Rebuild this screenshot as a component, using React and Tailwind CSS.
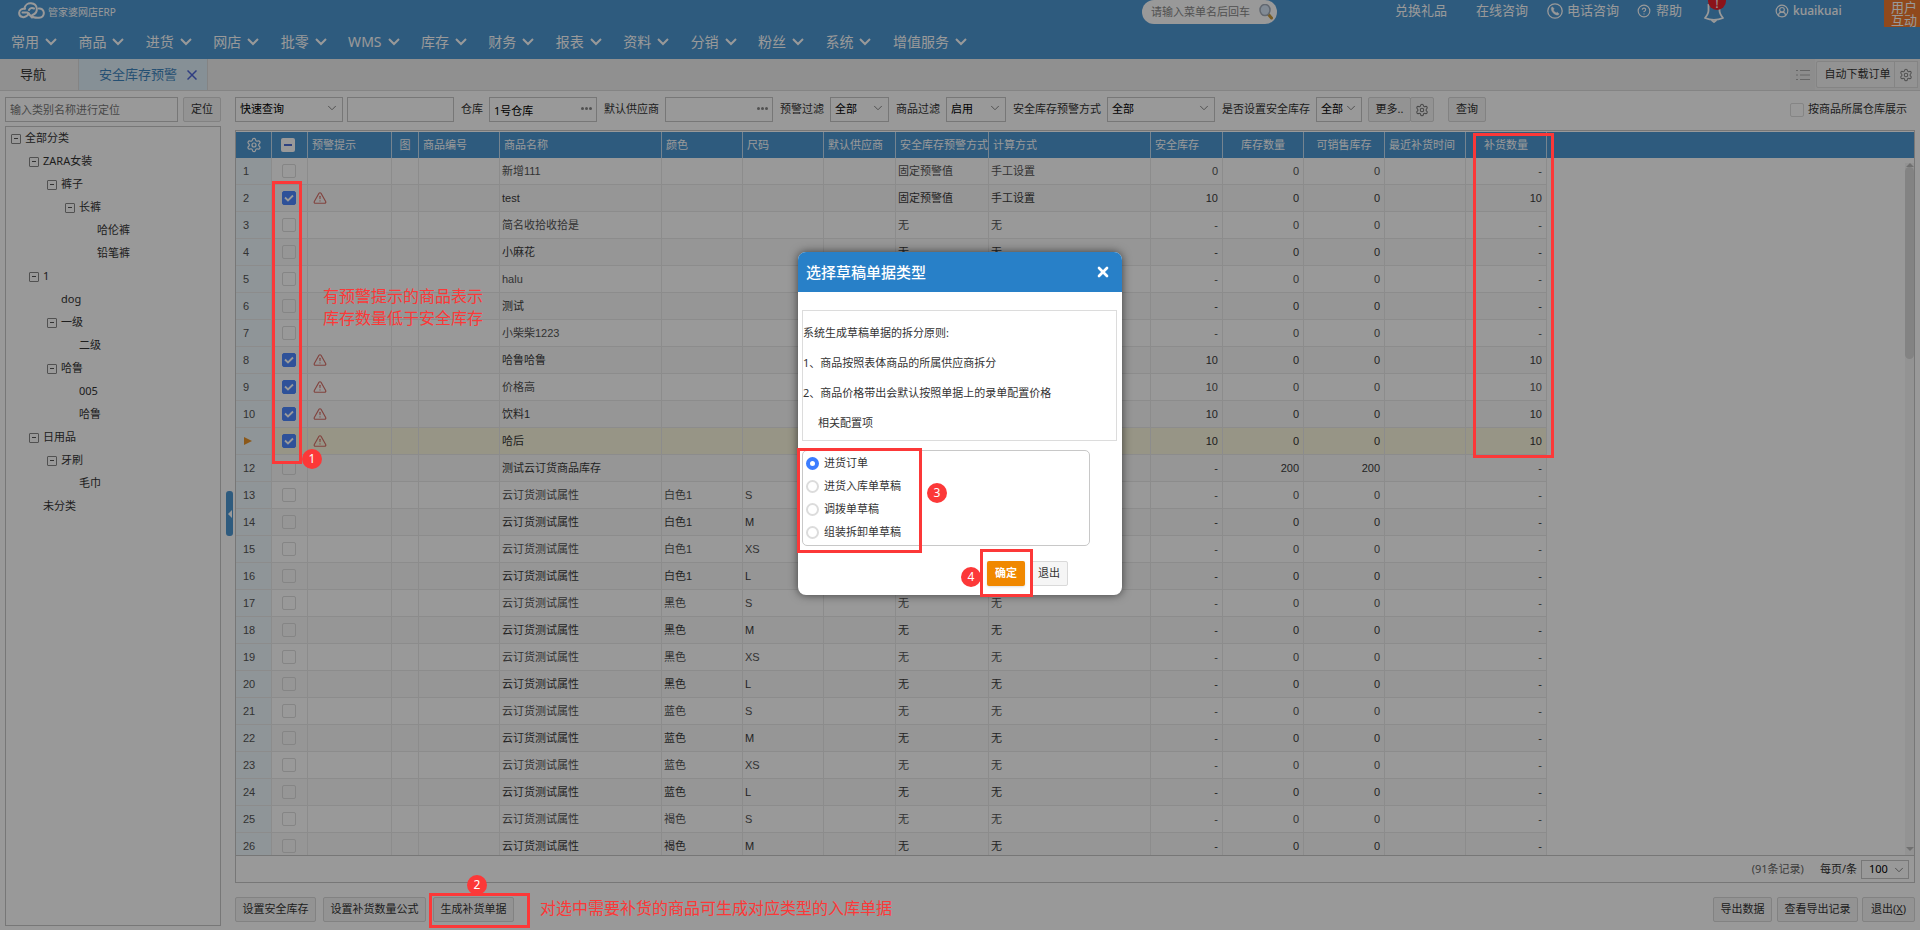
import { useState } from 'react';
import clsx from 'clsx';
import { Settings, ChevronDown, TriangleAlert, CircleHelp, CircleUserRound, X } from 'lucide-react';

const menus = ['常用', '商品', '进货', '网店', '批零', 'WMS', '库存', '财务', '报表', '资料', '分销', '粉丝', '系统', '增值服务'];

const tree = [
  { name: '全部分类', level: 0, open: true },
  { name: 'ZARA女装', level: 1, open: true },
  { name: '裤子', level: 2, open: true },
  { name: '长裤', level: 3, open: true },
  { name: '哈伦裤', level: 4 },
  { name: '铅笔裤', level: 4 },
  { name: '1', level: 1, open: true },
  { name: 'dog', level: 2 },
  { name: '一级', level: 2, open: true },
  { name: '二级', level: 3 },
  { name: '哈鲁', level: 2, open: true },
  { name: '005', level: 3 },
  { name: '哈鲁', level: 3 },
  { name: '日用品', level: 1, open: true },
  { name: '牙刷', level: 2, open: true },
  { name: '毛巾', level: 3 },
  { name: '未分类', level: 1 },
];

const columns = [
  { title: '预警提示', width: 84 },
  { title: '图', width: 27, center: true },
  { title: '商品编号', width: 81 },
  { title: '商品名称', width: 162 },
  { title: '颜色', width: 81 },
  { title: '尺码', width: 81 },
  { title: '默认供应商', width: 72 },
  { title: '安全库存预警方式', width: 93 },
  { title: '计算方式', width: 162 },
  { title: '安全库存', width: 72 },
  { title: '库存数量', width: 81, center: true },
  { title: '可销售库存', width: 81, center: true },
  { title: '最近补货时间', width: 81 },
  { title: '补货数量', width: 81, center: true },
];

const base = { color: '', size: '', mode: '无', calc: '无', safe: '-', stock: 0, sale: 0, fill: '-' };
const warn = { mode: '固定预警值', calc: '手工设置', safe: 10, fill: 10, warning: true };

const colors = ['白色1', '黑色', '蓝色', '褐色'];
const sizes = ['S', 'M', 'XS', 'L'];

const rows = [
  { name: '新增111', mode: '固定预警值', calc: '手工设置', safe: 0 },
  { name: 'test', ...warn },
  { name: '简名收拾收拾是' },
  { name: '小麻花' },
  { name: 'halu' },
  { name: '测试' },
  { name: '小柴柴1223' },
  { name: '哈鲁哈鲁', ...warn },
  { name: '价格高', ...warn },
  { name: '饮料1', ...warn },
  { name: '哈后', ...warn, current: true },
  { name: '测试云订货商品库存', stock: 200, sale: 200 },
  ...Array.from({ length: 14 }, (_, i) => ({
    name: '云订货测试属性',
    color: colors[Math.floor(i / 4)],
    size: sizes[i % 4],
  })),
].map((row) => ({ ...base, ...row }));

const draftTypes = ['进货订单', '进货入库单草稿', '调拨单草稿', '组装拆卸单草稿'];

function Logo() {
  return (
    <svg viewBox="0 0 27 17" className="h-[17px] w-[27px]" fill="none" stroke="#fff" strokeWidth="2" strokeLinecap="round">
      <path d="M11 11.5c-2 3-4.500 4-6.500 3.500C2 14.500 1 12.500 1.200 10.500 1.500 8 4 6.200 7 6.800M4.500 10.500h5" />
      <path d="M6.500 6.500C7 3 10 1 13 1.200c3.200.2 5.500 2.300 5.800 5.300.3 3-1.500 5.500-4.300 6.500M11 8c1-2 3-2.500 5-1.500" />
      <path d="M13 13.500c2 2.300 5.500 2.500 8 2.300 3-.3 5-2.300 4.800-5.300-.3-2.700-2.500-4.300-5-4M10 11l4 4.500" />
    </svg>
  );
}

function SearchIcon() {
  return (
    <svg viewBox="0 0 14 16" className="h-4 w-3.5">
      <path d="M9.500 10.500l3 3.500" stroke="#c89a3c" strokeWidth="3" strokeLinecap="round" />
      <ellipse cx="6" cy="6" rx="5" ry="5.500" fill="#d7e6f7" stroke="#a3adbb" strokeWidth="1.500" />
    </svg>
  );
}

function PhoneIcon() {
  return (
    <svg viewBox="0 0 16 16" className="size-4" fill="none" stroke="#fff">
      <circle cx="8" cy="8" r="7.200" strokeWidth="1.300" />
      <path d="M5.300 3.800l-1 1.200c-.3 3.500 3 7 6.700 7.100l1.200-1-1.900-1.900-1.100.7C7.800 9.300 6.800 8.300 6.300 7l.8-1.200z" fill="#fff" strokeWidth=".5" />
    </svg>
  );
}

function BellIcon() {
  return (
    <svg viewBox="0 0 20 20" className="h-5 w-5" fill="none" stroke="#fff" strokeWidth="1.800" strokeLinejoin="round">
      <path d="M4.500 1v6.500c0 3-1.500 5-3.500 7.500 5.500 2.200 12.500 2.200 18 0-2-2.500-3.500-4.500-3.500-7.500V1" />
      <path d="M7.500 17l2.500 2 2.500-2" />
    </svg>
  );
}

function Select({ label, value, className }) {
  return (
    <span className={clsx('relative block h-[25px]', className)}>
      <select aria-label={label} className="block h-full w-full appearance-none border border-[#c6c6c6] bg-white pl-1 text-black outline-none">
        <option>{value}</option>
      </select>
      <ChevronDown className="pointer-events-none absolute top-1 right-1 size-3.5 text-[#777]" strokeWidth={1.5} />
    </span>
  );
}

function Button({ children, className }) {
  return (
    <button type="button" className={clsx('h-[25px] shrink-0 rounded-[2px] border border-[#d9d9d9] bg-[#f5f5f5] text-[#333]', className)}>
      {children}
    </button>
  );
}

function Check({ checked, label }) {
  return (
    <span className="relative mx-auto block size-[14px]">
      <input
        type="checkbox"
        aria-label={label}
        defaultChecked={checked}
        className="peer block size-[14px] appearance-none rounded-[2px] border border-[#dedede] checked:border-[#4d88ff] checked:bg-[#4d88ff]"
      />
      <svg viewBox="0 0 14 14" className="pointer-events-none absolute inset-0 hidden size-[14px] peer-checked:block" fill="none" stroke="#fff" strokeWidth="1.800">
        <path d="M3 6.500l3 3 5-5" />
      </svg>
    </span>
  );
}

function FilterLabel({ children, htmlFor }) {
  return <label htmlFor={htmlFor} className="shrink-0 pr-1.5 pl-[7px] text-[#333]">{children}</label>;
}

function PickerInput({ id, value }) {
  return (
    <span className="relative block h-[25px] w-[108px] shrink-0">
      <input id={id} defaultValue={value} className="block h-full w-full border border-[#c6c6c6] pl-1 text-black outline-none" />
      <svg viewBox="0 0 11 3" className="absolute top-[10px] right-[5px] h-[3px] w-[11px]" fill="#888">
        <circle cx="1.500" cy="1.500" r="1.500" />
        <circle cx="5.500" cy="1.500" r="1.500" />
        <circle cx="9.500" cy="1.500" r="1.500" />
      </svg>
    </span>
  );
}

function Header() {
  return (
    <header className="h-[59px] shrink-0 bg-[#4d98d3] text-white">
      <div className="flex h-6 items-start">
        <div className="flex gap-[3px] pt-0.5 pl-[18px]">
          <Logo />
          <span className="pt-0.5 text-[10px] leading-4">管家婆网店ERP</span>
        </div>
        <div className="mr-[118px] ml-auto flex h-6 w-[135px] items-center rounded-xl bg-white pr-1 pl-[9px]">
          <input aria-label="搜索菜单" placeholder="请输入菜单名后回车" className="w-[108px] text-[11px] outline-none placeholder:text-[#888]" />
          <SearchIcon />
        </div>
        <nav className="flex h-[22px] items-center text-[13px]">
          <a href="#gift" className="mr-[29px]">兑换礼品</a>
          <a href="#chat" className="mr-[19px]">在线咨询</a>
          <a href="#phone" className="mr-[18px] flex items-center gap-1">
            <PhoneIcon />
            电话咨询
          </a>
          <a href="#help" className="mr-[22px] flex items-center gap-[5px]">
            <CircleHelp className="size-3.5" />
            帮助
          </a>
          <button type="button" aria-label="消息" className="relative mr-[51px] pt-1">
            <BellIcon />
            <span className="absolute -top-[7px] left-1 size-[18px] rounded-full bg-[#e8202c] pt-0.5 text-center text-[13px] leading-[18px]">!</span>
          </button>
          <a href="#user" className="flex w-[109px] items-center gap-1">
            <CircleUserRound className="size-3.5" />
            <span className="text-[12px] font-medium">kuaikuai</span>
          </a>
        </nav>
        <button type="button" className="h-[27px] w-9 bg-[#f07a30] pl-1 text-[13px] leading-[13px]">用户互动</button>
      </div>
      <nav className="box-content flex h-[34px] w-[956px] items-center justify-between pl-[11px] text-[14px]">
        {menus.map((name) => (
          <a key={name} href="#menu" className="flex items-center gap-1.5">
            {name}
            <svg viewBox="0 0 12 8" className="mt-0.5 h-2 w-3" fill="none" stroke="#fff" strokeWidth="2">
              <path d="M1 1l5 5 5-5" />
            </svg>
          </a>
        ))}
      </nav>
    </header>
  );
}

function TabBar() {
  return (
    <div className="flex h-8 shrink-0 border-b border-[#dcdcdc] bg-[#f1f1f1] text-[13px]">
      <button type="button" className="w-[79px] border-r border-[#dcdcdc] pr-3 text-[#333]">导航</button>
      <div className="flex w-[129px] items-center justify-between border-r border-[#dcdcdc] bg-[#dff0fa] pr-2.5 pl-5 text-[#3f86c0]">
        <a href="#tab">安全库存预警</a>
        <button type="button" aria-label="关闭">
          <svg viewBox="0 0 10 10" className="size-2.5" stroke="#5068d8" strokeWidth="1.500">
            <path d="M.5.5l9 9M9.500.5l-9 9" />
          </svg>
        </button>
      </div>
      <div className="ml-auto flex items-center pr-0.5">
        <button type="button" aria-label="列表" className="flex h-full w-[25px] items-center justify-center bg-[#ebebeb]">
          <svg viewBox="0 0 14 10" className="h-2.5 w-3.5" stroke="#aaa">
            <path d="M0 .5h2M4 .5h10M0 5h2M4 5h10M0 9.500h2M4 9.500h10" />
          </svg>
        </button>
        <button type="button" className="ml-px h-[27px] w-[79px] rounded-l-[2px] border border-[#dcdcdc] bg-[#f5f5f5] pl-1 text-[11px] text-[#333]">自动下载订单</button>
        <button type="button" aria-label="下载设置" className="-ml-px flex h-[27px] w-6 items-center justify-center border border-[#dcdcdc] bg-[#f5f5f5]">
          <Settings className="size-3.5 text-[#888]" strokeWidth={1.8} />
        </button>
      </div>
    </div>
  );
}

function Sidebar() {
  return (
    <aside className="flex w-[216px] shrink-0 flex-col pb-1">
      <div className="flex justify-between">
        <input aria-label="类别名称" placeholder="输入类别名称进行定位" className="h-[25px] w-[173px] border border-[#c6c6c6] pl-1 outline-none placeholder:text-[#777]" />
        <Button className="w-[38px]">定位</Button>
      </div>
      <ul className="mt-1 min-h-0 flex-1 border border-[#c6c6c6] pl-[5px] text-[#333]">
        {tree.map((node, i) => (
          <li key={i} className="flex h-[23px] items-center gap-1" style={{ paddingLeft: node.level * 18 }}>
            {node.open ? (
              <button type="button" aria-label="收起" className="flex size-[10px] items-center justify-center rounded-[1px] border border-[#888]">
                <span className="h-px w-1 bg-[#555]" />
              </button>
            ) : (
              <span className="w-[10px]" />
            )}
            {node.name}
          </li>
        ))}
      </ul>
    </aside>
  );
}

function Filters() {
  return (
    <form className="flex items-center">
      <Select label="查询方案" value="快速查询" className="w-[108px] shrink-0" />
      <input aria-label="关键字" className="ml-1 h-[25px] w-[107px] shrink-0 border border-[#c6c6c6] outline-none" />
      <FilterLabel htmlFor="warehouse">仓库</FilterLabel>
      <PickerInput id="warehouse" value="1号仓库" />
      <FilterLabel htmlFor="supplier">默认供应商</FilterLabel>
      <PickerInput id="supplier" />
      <FilterLabel>预警过滤</FilterLabel>
      <Select label="预警过滤" value="全部" className="w-[59px] shrink-0" />
      <FilterLabel>商品过滤</FilterLabel>
      <Select label="商品过滤" value="启用" className="w-[60px] shrink-0" />
      <FilterLabel>安全库存预警方式</FilterLabel>
      <Select label="安全库存预警方式" value="全部" className="w-[108px] shrink-0" />
      <FilterLabel>是否设置安全库存</FilterLabel>
      <Select label="是否设置安全库存" value="全部" className="w-[46px] shrink-0" />
      <Button className="ml-1.5 w-[43px]">更多..</Button>
      <Button className="-ml-px flex w-6 items-center justify-center">
        <Settings className="size-3.5 text-[#777]" strokeWidth={1.8} />
      </Button>
      <Button className="ml-3.5 w-[38px]">查询</Button>
      <label className="ml-auto flex items-center gap-1 pr-2 text-[#333]">
        <Check label="按商品所属仓库展示" />
        按商品所属仓库展示
      </label>
    </form>
  );
}

function StockRow({ row, index }) {
  const cell = 'h-[27px] border-r border-b border-[#e9e9e9] px-0.5 whitespace-nowrap';
  const num = clsx(cell, 'pr-1 text-right');
  return (
    <tr
      className={clsx(
        row.current ? 'bg-[#fcf8df] text-[#333]' : index % 2 ? 'bg-[#fafafa] text-[#3a3a3a]' : 'text-[#555]'
      )}
    >
      <td className={clsx(cell, 'bg-[#eff8fd] pl-[7px] text-[#555]')}>
        {row.current ? (
          <svg viewBox="0 0 8 8" className="ml-px size-2" fill="#e8932a">
            <path d="M0 0l8 4-8 4z" />
          </svg>
        ) : (
          index + 1
        )}
      </td>
      <td className={clsx(cell, 'pr-1')}>
        <Check checked={row.warning} label={`选择 ${row.name}`} />
      </td>
      <td className={clsx(cell, 'pl-[5px]')}>
        {row.warning && <TriangleAlert className="size-3.5 text-[#d87068]" />}
      </td>
      <td className={cell} />
      <td className={cell} />
      <td className={cell}>{row.name}</td>
      <td className={cell}>{row.color}</td>
      <td className={cell}>{row.size}</td>
      <td className={cell} />
      <td className={cell}>{row.mode}</td>
      <td className={cell}>{row.calc}</td>
      <td className={num}>{row.safe}</td>
      <td className={num}>{row.stock}</td>
      <td className={num}>{row.sale}</td>
      <td className={cell} />
      <td className={num}>{row.fill}</td>
      <td className="bg-white" />
    </tr>
  );
}

function StockTable() {
  const head = 'h-[26px] border-r border-[#c4dcf0] font-normal whitespace-nowrap';
  return (
    <div className="mt-2 flex min-h-0 flex-1 flex-col border border-[#c6c6c6] pt-px">
      <div className="relative min-h-0 flex-1 overflow-hidden font-['Liberation_Sans','Noto_Sans_CJK_SC',sans-serif]">
        <table className="w-full table-fixed border-separate border-spacing-0">
          <colgroup>
            <col className="w-9" />
            <col className="w-9" />
            {columns.map((col) => (
              <col key={col.title} style={{ width: col.width }} />
            ))}
            <col />
          </colgroup>
          <thead className="bg-[#4d98d3] text-white">
            <tr>
              <th className={head}>
                <Settings className="mx-auto size-4" strokeWidth={1.8} />
              </th>
              <th className={clsx(head, 'pr-1')}>
                <button type="button" aria-label="全选" className="mx-auto flex size-[14px] items-center justify-center rounded-[2px] bg-white">
                  <span className="h-0.5 w-2 bg-[#4d6fd8]" />
                </button>
              </th>
              {columns.map((col) => (
                <th key={col.title} className={clsx(head, col.center ? 'text-center' : 'pl-1 text-left')}>
                  {col.title}
                </th>
              ))}
              <th />
            </tr>
          </thead>
          <tbody>
            {rows.map((row, i) => (
              <StockRow key={i} row={row} index={i} />
            ))}
          </tbody>
        </table>
        {/* scrollbar */}
        <div className="absolute top-[31px] right-0 bottom-0 flex w-[9px] flex-col items-center justify-between bg-[#f6f6f6]">
          <span className="border-x-4 border-b-4 border-x-transparent border-b-[#bbb]" />
          <span className="h-[192px] w-full rounded-full bg-[#dadada]" />
          <span className="mt-auto mb-1 border-x-4 border-t-4 border-x-transparent border-t-[#bbb]" />
        </div>
      </div>
      <div className="flex h-[27px] shrink-0 items-center justify-end border-t border-[#c6c6c6] pr-[5px]">
        <span className="mr-4 text-[#666]">(91条记录)</span>
        <label htmlFor="page-size" className="mr-1 text-[#333]">每页/条</label>
        <span className="relative block">
          <select id="page-size" className="block h-[19px] w-12 appearance-none border border-[#c6c6c6] pl-[7px] text-black outline-none">
            <option>100</option>
          </select>
          <ChevronDown className="pointer-events-none absolute top-[3px] right-[3px] size-3.5 text-[#777]" strokeWidth={1.5} />
        </span>
      </div>
    </div>
  );
}

function Badge({ children, className }) {
  return (
    <span className={clsx('absolute size-5 rounded-full bg-[#fc3838] text-center text-[12px] leading-5 text-white', className)}>{children}</span>
  );
}

function Mark({ className }) {
  return <span className={clsx('pointer-events-none absolute border-3 border-[#fc3838]', className)} />;
}

function DraftDialog() {
  const [type, setType] = useState(draftTypes[0]);

  return (
    <div role="dialog" aria-label="选择草稿单据类型" className="relative w-[324px] rounded-lg bg-white text-[#333] shadow-[0_0_10px_rgba(0,0,0,0.6)]">
      <div className="flex h-10 items-center justify-between rounded-t-lg bg-[#2880c8] pr-[11px] pl-2 text-[15px] font-medium text-white">
        选择草稿单据类型
        <button type="button" aria-label="关闭">
          <X className="size-4" strokeWidth={4} />
        </button>
      </div>
      <div className="mr-[5px] ml-1 mt-[18px] border border-[#dcdcdc] pt-[7px] pb-0.5 leading-[30px]">
        <p>系统生成草稿单据的拆分原则:</p>
        <p>1、商品按照表体商品的所属供应商拆分</p>
        <p>2、商品价格带出会默认按照单据上的录单配置价格</p>
        <p className="pl-[15px]">相关配置项</p>
      </div>
      <fieldset className="mt-[9px] mr-8 ml-1 rounded-[5px] border border-[#c8c8c8] py-px pl-[3px]">
        {draftTypes.map((name) => (
          <label key={name} className="flex h-[23px] items-center gap-[5px]">
            <input
              type="radio"
              name="draft"
              checked={type === name}
              onChange={() => setType(name)}
              className="size-[13px] appearance-none rounded-full border-2 border-[#dcdcdc] checked:border-4 checked:border-[#3b7cff]"
            />
            {name}
          </label>
        ))}
      </fieldset>
      <div className="flex justify-end gap-[5px] pt-[15px] pr-[54px] pb-[9px]">
        <button type="button" className="h-[25px] w-[38px] rounded-[2px] bg-[#f08800] font-bold text-white shadow">确定</button>
        <Button className="w-[38px]">退出</Button>
      </div>
      <Mark className="top-[196px] -left-px h-[105px] w-[125px]" />
      <Badge className="top-[231px] left-[129px]">3</Badge>
      <Mark className="top-[297px] left-[182px] h-12 w-[53px]" />
      <Badge className="top-[315px] left-[163px]">4</Badge>
    </div>
  );
}

export default function App() {
  return (
    <div className="relative flex h-screen flex-col overflow-hidden bg-white font-['Noto_Sans','Noto_Sans_CJK_SC',sans-serif] text-[11px]">
      <Header />
      <TabBar />
      <div className="flex min-h-0 flex-1 px-[5px] pt-1.5">
        <Sidebar />
        <button type="button" aria-label="收起分类" className="mr-0.5 ml-[5px] flex h-[45px] w-[7px] shrink-0 items-center justify-center self-center rounded-[3px] bg-[#4d98d3]">
          <span className="border-y-4 border-r-4 border-y-transparent border-r-white" />
        </button>
        <main className="flex min-w-0 flex-1 flex-col pb-2">
          <Filters />
          <StockTable />
          <div className="mt-3.5 flex">
            <Button className="w-[81px]">设置安全库存</Button>
            <Button className="ml-[7px] w-[103px]">设置补货数量公式</Button>
            <Button className="ml-[7px] w-[81px]">生成补货单据</Button>
            <Button className="ml-auto w-[59px]">导出数据</Button>
            <Button className="ml-[5px] w-[81px]">查看导出记录</Button>
            <Button className="ml-1 w-[53px]">退出(<u>X</u>)</Button>
          </div>
        </main>
      </div>

      {/* mask with the dialog */}
      <div className="absolute inset-0 flex items-start justify-center bg-black/40 pt-[252px]">
        <DraftDialog />
      </div>

      {/* guide marks */}
      <div className="pointer-events-none absolute inset-0 text-[16px] leading-[22px] text-[#fc3838]">
        <Mark className="top-[181px] left-[272px] h-[283px] w-[30px]" />
        <Badge className="top-[449px] left-[302px]">1</Badge>
        <p className="absolute top-[285px] left-[323px]">
          有预警提示的商品表示
          <br />
          库存数量低于安全库存
        </p>
        <Mark className="top-[133px] left-[1473px] h-[325px] w-[81px]" />
        <Badge className="top-[875px] left-[467px]">2</Badge>
        <Mark className="top-[893px] left-[429px] h-[35px] w-[101px]" />
        <p className="absolute top-[897px] left-[540px]">对选中需要补货的商品可生成对应类型的入库单据</p>
      </div>
    </div>
  );
}
